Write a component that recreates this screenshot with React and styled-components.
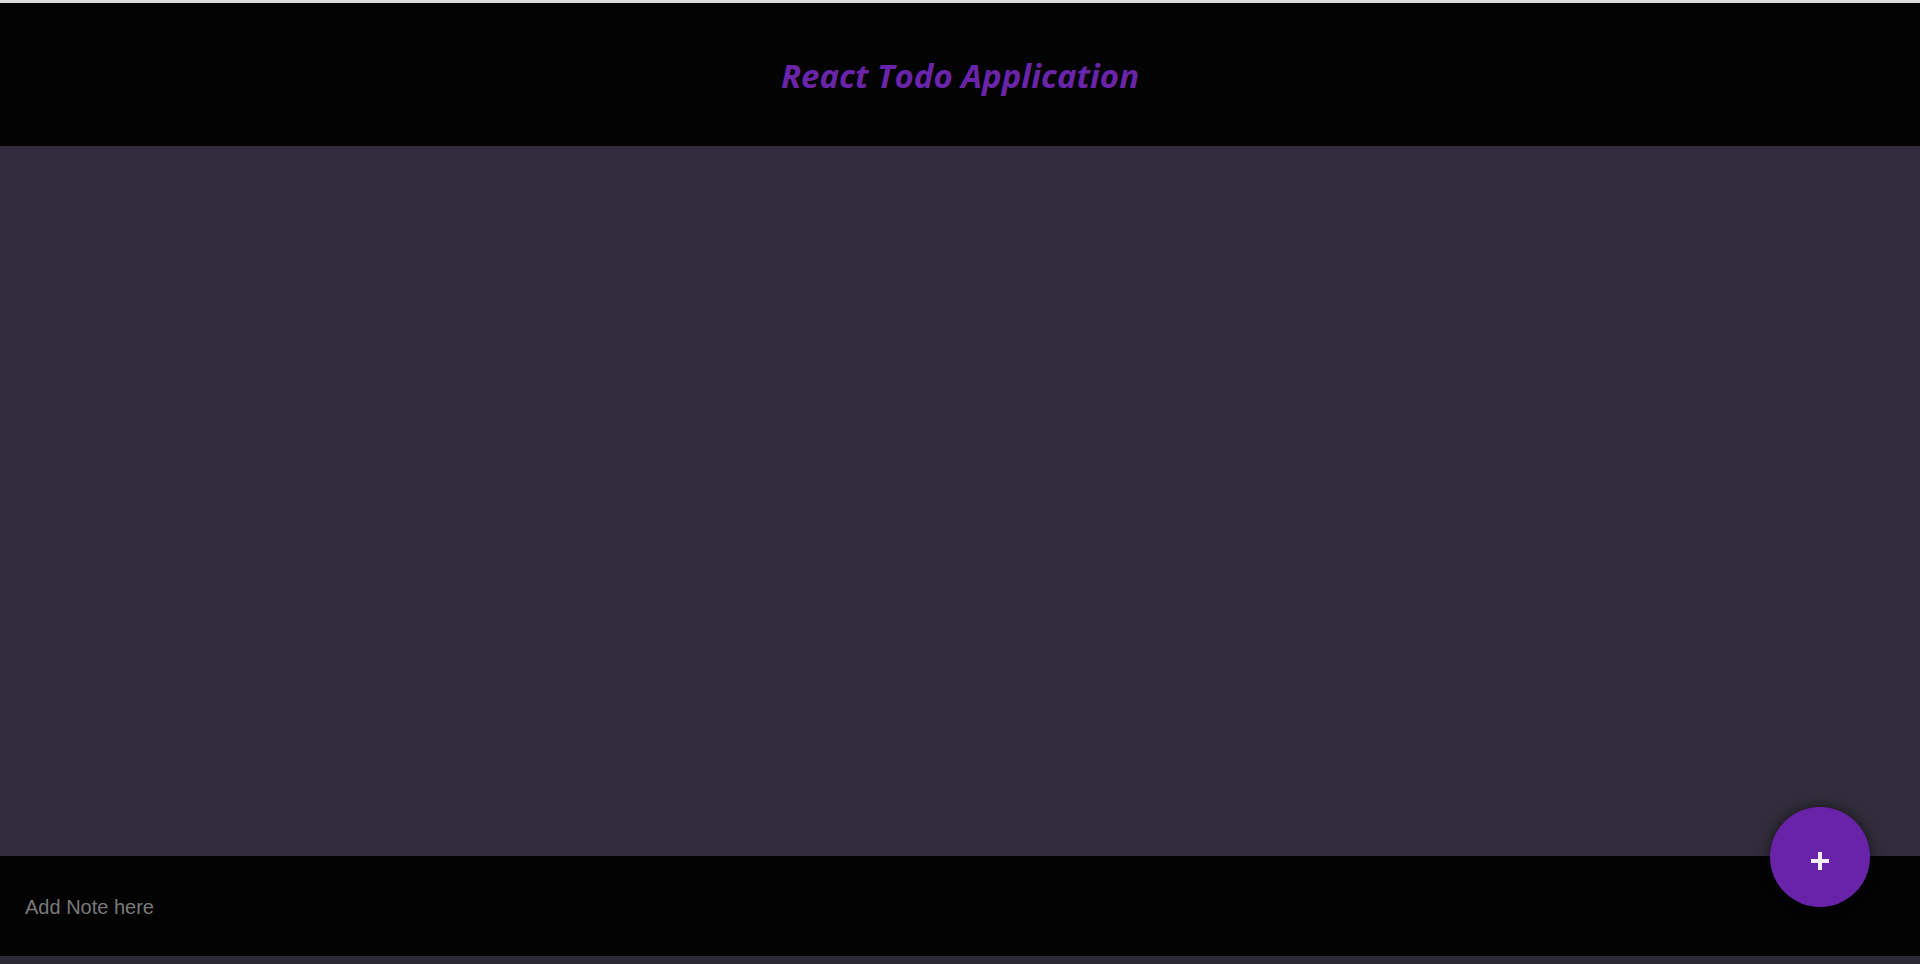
import styled, { createGlobalStyle } from "styled-components";
import { useState } from "react";

const GlobalStyle = createGlobalStyle`
  html, body {
    margin: 0;
    padding: 0;
    background-color: #2b2933;
  }
  * {
    box-sizing: border-box;
  }
`;

const App = () => {
  const [note, setNote] = useState("");
  const [notes, setNotes] = useState([]);

  const addNote = () => {
    if (!note.trim()) return;
    setNotes([...notes, note]);
    setNote("");
  };

  return (
    <>
      <GlobalStyle />
      <Page>
        <TopStrip />
        <Header>
          <Title>React Todo Application</Title>
        </Header>
        <Board>
          {notes.map((n, i) => (
            <Note key={i}>{n}</Note>
          ))}
        </Board>
        <Footer>
          <NoteInput
            type="text"
            placeholder="Add Note here"
            value={note}
            onChange={(e) => setNote(e.target.value)}
          />
          <AddButton onClick={addNote}>
            <svg width="18" height="18" viewBox="0 0 18 18">
              <rect x="7" y="0" width="4" height="18" fill="#f3ecfb" />
              <rect x="0" y="7" width="18" height="4" fill="#f3ecfb" />
            </svg>
          </AddButton>
        </Footer>
      </Page>
    </>
  );
};

const Page = styled.div`
  display: flex;
  flex-direction: column;
  height: 956px;
`;

const TopStrip = styled.div`
  height: 3px;
  background-color: #dcdcdc;
`;

const Header = styled.header`
  height: 143px;
  background-color: #030303;
  display: flex;
  justify-content: center;
  align-items: center;
`;

const Title = styled.h1`
  margin: 0;
  padding-top: 2px;
  font-family: "Open Sans", "Lato", sans-serif;
  font-style: italic;
  font-weight: 700;
  font-size: 33px;
  color: #6a24a9;
`;

const Board = styled.main`
  flex: 1;
  background-color: #312d3c;
  display: flex;
  flex-wrap: wrap;
  align-content: flex-start;
  gap: 16px;
  padding: 24px;
`;

const Note = styled.div`
  background-color: #3f3a4d;
  color: #eee;
  font-family: "Liberation Sans", Arial, sans-serif;
  padding: 12px 16px;
  border-radius: 6px;
`;

const Footer = styled.footer`
  position: relative;
  height: 100px;
  background-color: #030303;
  display: flex;
  align-items: center;
  padding-left: 25px;
`;

const NoteInput = styled.input`
  flex: 1;
  margin-right: 200px;
  background: none;
  border: none;
  outline: none;
  color: #ddd;
  font-family: "Liberation Sans", Arial, sans-serif;
  font-size: 20px;
  padding: 0;
  margin-top: 3px;

  &::placeholder {
    color: #7a7a7a;
  }
`;

const AddButton = styled.button`
  position: absolute;
  right: 50px;
  top: -49px;
  width: 100px;
  height: 100px;
  border-radius: 50%;
  border: none;
  background-color: #6923a8;
  box-shadow: 0 0 14px rgba(0, 0, 0, 0.55);
  display: flex;
  justify-content: center;
  align-items: center;
  padding: 0;
  padding-top: 8px;
  cursor: pointer;
`;

export default App;
